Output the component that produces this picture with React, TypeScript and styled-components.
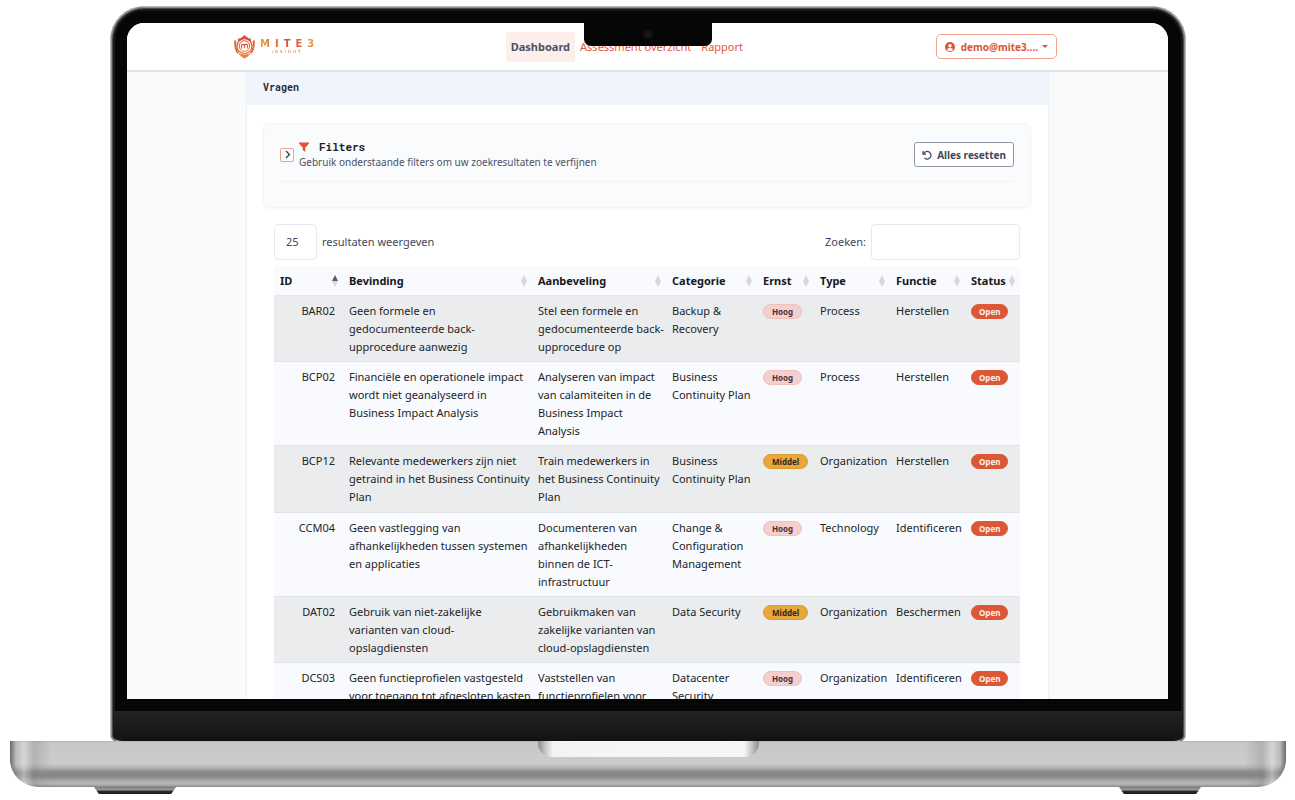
import React from "react";
import styled, { createGlobalStyle, css } from "styled-components";

const GlobalStyle = createGlobalStyle`
  *, *::before, *::after { box-sizing: border-box; }
  body {
    margin: 0;
    background: #fff;
    color: #212529;
    font-family: "Noto Sans", "Open Sans", sans-serif;
    font-size: 11px;
    line-height: 18px;
  }
  button, input, select { font: inherit; color: inherit; }
`;

const mono = `"Roboto Mono", "DejaVu Sans Mono", monospace`;

/* ---------- Laptop ---------- */

const Stage = styled.div`
  display: flex;
  flex-direction: column;
  height: 100vh;
  min-height: 480px;
  padding: 6px 9px 6px 10px;
  overflow: hidden;
`;

const Lid = styled.div`
  position: relative;
  flex: 1;
  min-height: 0;
  display: flex;
  flex-direction: column;
  margin: 0 100px;
  border-radius: 34px 34px 6px 6px;
  background: #060606;
  border: 1px solid #b9bab9;
  border-bottom: 0;
  box-shadow: inset 0 0 0 1px #8d8e8d, inset 0 0 0 2px #4a4b4b, inset 0 0 1px 4px #1b1b1b;
  overflow: hidden;
`;

const Screen = styled.div`
  flex: 1;
  min-height: 0;
  margin: 16px 17px 12px 16px;
  border-radius: 17px 17px 0 0;
  background: #f8fafc;
  overflow: hidden;
`;

const Chin = styled.div`
  height: 30px;
  flex: none;
  margin: 0 3px;
  border-radius: 0 0 8px 8px;
  background: linear-gradient(#232323, #191919 60%, #121212);
`;

const Camera = styled.div`
  position: absolute;
  top: 15px;
  left: 50%;
  transform: translateX(-50%);
  display: grid;
  place-items: center;
  width: 128px;
  height: 24px;
  border-radius: 0 0 7px 7px;
  background: #060606;
  &::before {
    content: "";
    width: 10px;
    height: 10px;
    border-radius: 50%;
    background: radial-gradient(circle, #222224 0 1px, #0c0c0d 2px, #161617 3px, #0e0e0e 5px);
  }
`;

const Base = styled.div`
  position: relative;
  z-index: 1;
  flex: none;
  height: 46px;
  display: flex;
  justify-content: center;
  border-radius: 0 0 28px 28px;
  background:
    linear-gradient(90deg, rgba(70,72,74,.75) 0, rgba(150,152,154,.3) 6px, rgba(225,226,227,.5) 14px, rgba(120,122,124,.3) 24px, rgba(140,142,144,.25) 30px, transparent 42px),
    linear-gradient(270deg, rgba(70,72,74,.75) 0, rgba(150,152,154,.3) 6px, rgba(225,226,227,.5) 14px, rgba(120,122,124,.3) 24px, rgba(140,142,144,.25) 30px, transparent 42px),
    linear-gradient(#a5a6a7 0, #c5c7c8 1px, #cbcccd 22px, #b9babb 26px, #87898b 31px, #828486 35px, #a2a3a5 39px, #b7b8ba 42px, #a9aaac 44px, #848587 46px);
`;

const ThumbGroove = styled.div`
  width: 221px;
  height: 16px;
  border-radius: 0 0 14px 14px;
  background: linear-gradient(90deg, #8c8d8f 0, #c9cacb 8px, #f4f4f4 15px, #f7f7f7 calc(100% - 15px), #c9cacb calc(100% - 8px), #8c8d8f 100%);
`;

const Feet = styled.div`
  flex: none;
  display: flex;
  justify-content: space-between;
  padding: 0 85px 0 84px;
`;

const Foot = styled.div`
  width: 82px;
  height: 7px;
  clip-path: polygon(0 0, 100% 0, 94% 100%, 6% 100%);
  background: linear-gradient(#77797b 0, #a0a1a3 3px, #2b2b2c 4px, #1d1d1e 7px);
`;

/* ---------- Top bar ---------- */

const TopBar = styled.header`
  height: 49px;
  background: #fff;
  border-bottom: 2px solid #e1e5ea;
`;

const TopBarInner = styled.div`
  display: flex;
  align-items: center;
  justify-content: space-between;
  max-width: 827px;
  height: 100%;
  margin: 0 auto;
  padding-right: 4px;
`;

const Brand = styled.a`
  display: flex;
  align-items: center;
  gap: 5px;
  width: 84px;
  text-decoration: none;
`;

const Shield = styled.svg`
  flex: none;
  width: 21px;
  height: 24px;
`;

const Wordmark = styled.span`
  display: grid;
  justify-items: center;
  font-family: "DejaVu Sans", sans-serif;
  font-weight: 700;
  color: transparent;
  background: linear-gradient(90deg, #eca03b, #d9503a 45%, #dc5a38 70%, #e99a3e);
  background-clip: text;
`;

const BrandName = styled.span`
  font-size: 10px;
  line-height: 10px;
  letter-spacing: 5px;
  margin-right: -5px;
`;

const BrandSub = styled.span`
  font-size: 4px;
  line-height: 6px;
  letter-spacing: 2px;
  font-weight: 400;
`;

const Nav = styled.nav`
  display: flex;
`;

const NavLink = styled.a<{ $active?: boolean }>`
  padding: 6px 5px;
  border-radius: 3px;
  color: #e4573a;
  text-decoration: none;
  white-space: nowrap;
  ${(p) =>
    p.$active &&
    css`
      background: #fceeeb;
      color: #4a5065;
      font-weight: 700;
    `}
`;

const UserButton = styled.button`
  display: flex;
  align-items: center;
  gap: 6px;
  height: 25px;
  padding: 0 8px;
  background: #fff;
  border: 1px solid #f0a192;
  border-radius: 5px;
  color: #dc5535;
  font-size: 10px;
  font-weight: 700;
  svg { width: 10px; height: 10px; }
`;

const Caret = styled.span`
  border: 3px solid transparent;
  border-top-color: currentColor;
  border-bottom: 0;
  margin-left: -2px;
`;

/* ---------- Card ---------- */

const Card = styled.main`
  max-width: 803px;
  margin: 0 auto;
  background: #fff;
  border: solid #ecf0f4;
  border-width: 0 1px;
`;

const CardTitle = styled.h1`
  margin: 0;
  padding: 7px 16px 9px;
  background: #f1f4fa;
  font-family: ${mono};
  font-size: 10px;
  line-height: 17px;
  color: #272b3a;
`;

const CardBody = styled.div`
  padding: 18px 17px 18px 16px;
`;

const FilterPanel = styled.section`
  height: 85px;
  padding: 15px 16px;
  border: 1px solid #f2f4f8;
  border-radius: 6px;
  background: #fafbfd;
  box-shadow: 0 1px 2px rgba(30, 40, 60, .04);
`;

const FilterHead = styled.div`
  display: flex;
  align-items: center;
  gap: 5px;
  padding-bottom: 11px;
  border-bottom: 1px solid #f1f3f6;
`;

const ToggleButton = styled.button`
  display: grid;
  place-items: center;
  flex: none;
  width: 14px;
  height: 14px;
  padding: 0;
  background: #fff;
  border: 1px solid #f0a192;
  border-radius: 2px;
  color: #333a4d;
  svg { width: 9px; height: 9px; }
`;

const FilterText = styled.div`
  flex: 1;
`;

const FilterTitle = styled.h2`
  display: flex;
  align-items: center;
  gap: 10px;
  margin: 0;
  font-family: ${mono};
  font-size: 11px;
  line-height: 15px;
  color: #1f2431;
  svg { width: 10px; height: 10px; color: #dd5534; }
`;

const FilterHint = styled.p`
  margin: 0;
  font-size: 10px;
  line-height: 16px;
  color: #4b5266;
`;

const ResetButton = styled.button`
  display: flex;
  align-items: center;
  gap: 5px;
  height: 25px;
  padding: 0 7px;
  background: #fff;
  border: 1px solid #9095a3;
  border-radius: 3px;
  color: #41475b;
  font-size: 10px;
  font-weight: 700;
  svg { width: 10px; height: 10px; }
`;

const ListArea = styled.section`
  padding: 16px 11px 0;
`;

const Controls = styled.div`
  display: flex;
  justify-content: space-between;
  margin-bottom: 6px;
`;

const ControlLabel = styled.label`
  display: flex;
  align-items: center;
  gap: 5px;
  color: #41475b;
`;

const fieldStyle = css`
  height: 36px;
  border: 1px solid #e4e9f2;
  border-radius: 4px;
  background: #fff;
  outline: 0;
`;

const LengthSelect = styled.select`
  ${fieldStyle}
  width: 43px;
  padding: 0 11px;
  appearance: none;
`;

const SearchInput = styled.input`
  ${fieldStyle}
  width: 149px;
  padding: 0 11px;
`;

/* ---------- Table ---------- */

const Table = styled.table`
  width: 100%;
  table-layout: fixed;
  border-collapse: collapse;
  background: #f9fafd;
`;

const HeadCell = styled.th`
  padding: 6px 5px 6px 6px;
  text-align: left;
  font-weight: 700;
  color: #16181b;
  box-shadow: inset 0 -1px #e3e6ea;
`;

const HeadInner = styled.span`
  display: flex;
  align-items: center;
  justify-content: space-between;
  svg { flex: none; width: 6px; height: 12px; }
`;

const Row = styled.tr`
  &:nth-child(odd) { background: #ebecee; }
  &:nth-child(4n + 3) td { padding-bottom: 7px; }
`;

const Cell = styled.td<{ $right?: boolean }>`
  padding: 6px ${(p) => (p.$right ? 8 : 0)}px 6px 6px;
  vertical-align: top;
  text-align: ${(p) => (p.$right ? "right" : "left")};
  box-shadow: inset 0 -1px #dfe2e7;
`;

const tones = {
  hoog: css`background: #f3cfce; border-color: #efbfbc; color: #4d3234;`,
  middel: css`background: #e9a63a; border-color: #dd9b30; color: #33291a;`,
  open: css`background: #dc5735; border-color: #dc5735; color: #fdf0ea;`,
};

const Badge = styled.span<{ $tone: keyof typeof tones }>`
  display: inline-block;
  padding: 0 ${(p) => (p.$tone === "open" ? 7 : 8)}px;
  border: 1px solid;
  border-radius: 8px;
  font-size: 8px;
  line-height: 13px;
  font-weight: 700;
  ${(p) => tones[p.$tone]}
`;

type Finding = {
  id: string;
  finding: string;
  advice: string;
  category: string;
  level: "Hoog" | "Middel";
  type: string;
  func: string;
};

const findings: Finding[] = [
  { id: "BAR02", finding: "Geen formele en gedocumenteerde back-upprocedure aanwezig", advice: "Stel een formele en gedocumenteerde back-upprocedure op", category: "Backup & Recovery", level: "Hoog", type: "Process", func: "Herstellen" },
  { id: "BCP02", finding: "Financiële en operationele impact wordt niet geanalyseerd in Business Impact Analysis", advice: "Analyseren van impact van calamiteiten in de Business Impact Analysis", category: "Business Continuity Plan", level: "Hoog", type: "Process", func: "Herstellen" },
  { id: "BCP12", finding: "Relevante medewerkers zijn niet getraind in het Business Continuity Plan", advice: "Train medewerkers in het Business Continuity Plan", category: "Business Continuity Plan", level: "Middel", type: "Organization", func: "Herstellen" },
  { id: "CCM04", finding: "Geen vastlegging van afhankelijkheden tussen systemen en applicaties", advice: "Documenteren van afhankelijkheden binnen de ICT-infrastructuur", category: "Change & Configuration Management", level: "Hoog", type: "Technology", func: "Identificeren" },
  { id: "DAT02", finding: "Gebruik van niet-zakelijke varianten van cloud-opslagdiensten", advice: "Gebruikmaken van zakelijke varianten van cloud-opslagdiensten", category: "Data Security", level: "Middel", type: "Organization", func: "Beschermen" },
  { id: "DCS03", finding: "Geen functieprofielen vastgesteld voor toegang tot afgesloten kasten", advice: "Vaststellen van functieprofielen voor", category: "Datacenter Security", level: "Hoog", type: "Organization", func: "Identificeren" },
];

const columns = [
  { name: "ID", width: 69 },
  { name: "Bevinding", width: 189 },
  { name: "Aanbeveling", width: 134 },
  { name: "Categorie", width: 91 },
  { name: "Ernst", width: 57 },
  { name: "Type", width: 76 },
  { name: "Functie", width: 75 },
  { name: "Status", width: 55 },
];

const SortMark = ({ up }: { up?: boolean }) => (
  <svg viewBox="0 0 6 12" aria-hidden="true">
    <path d="M3 0 6 6H0z" fill={up ? "#5b5d61" : "#d6d8db"} />
    <path d="M3 12 0 6h6z" fill="#d6d8db" />
  </svg>
);

const Logo = () => (
  <Shield viewBox="0 0 42 48" fill="none" aria-hidden="true">
    <defs>
      <linearGradient id="shield" x1="0" y1="0" x2="0" y2="1">
        <stop offset="0" stopColor="#d9483a" />
        <stop offset="1" stopColor="#e8803a" />
      </linearGradient>
    </defs>
    <path d="M8 10C14 9 18 6 21 3c3 3 7 6 13 7" stroke="#dc4f3a" strokeWidth="4" />
    <path d="M2.500 11c-1 12 1 19 6 25M39.500 11c1 12-1 19-6 25" stroke="#e2683a" strokeWidth="4" />
    <path d="M10 37c3 4 7 7 11 9 4-2 8-5 11-9-7 4-15 4-22 0z" fill="#e8803a" stroke="#e8803a" strokeWidth="2" />
    <g stroke="url(#shield)">
      <circle cx="21" cy="22" r="15" strokeWidth="2.500" />
      <circle cx="21" cy="22" r="10.500" strokeWidth="2" />
      <path d="M15 27v-6q0-2.500 2.500-2.500h1q2.500 0 2.500 2.500v6m0-6q0-2.500 2.500-2.500h1q2.500 0 2.500 2.500v6" strokeWidth="2.500" />
    </g>
  </Shield>
);

export default function App() {
  return (
    <>
      <GlobalStyle />
      <Stage>
        <Lid>
          <Screen>
            <TopBar>
              <TopBarInner>
                <Brand href="#" aria-label="MITE3 Insight">
                  <Logo />
                  <Wordmark>
                    <BrandName>MITE3</BrandName>
                    <BrandSub>INSIGHT</BrandSub>
                  </Wordmark>
                </Brand>
                <Nav>
                  <NavLink href="#" $active>Dashboard</NavLink>
                  <NavLink href="#">Assessment overzicht</NavLink>
                  <NavLink href="#">Rapport</NavLink>
                </Nav>
                <UserButton type="button">
                  <svg viewBox="0 0 20 20" aria-hidden="true">
                    <circle cx="10" cy="10" r="10" fill="currentColor" />
                    <circle cx="10" cy="7.500" r="3.300" fill="#fff" />
                    <path d="M4 15.500c1-5 11-5 12 0-3 3.500-9 3.500-12 0z" fill="#fff" />
                  </svg>
                  demo@mite3....
                  <Caret />
                </UserButton>
              </TopBarInner>
            </TopBar>

            <Card>
              <CardTitle>Vragen</CardTitle>
              <CardBody>
                <FilterPanel>
                  <FilterHead>
                    <ToggleButton type="button" aria-label="Filters">
                      <svg viewBox="0 0 9 9" fill="none" stroke="currentColor" strokeWidth="1.300" aria-hidden="true">
                        <path d="M3 1l3.500 3.500L3 8" />
                      </svg>
                    </ToggleButton>
                    <FilterText>
                      <FilterTitle>
                        <svg viewBox="0 0 20 20" fill="currentColor" aria-hidden="true">
                          <path d="M0 1h20v2l-7.500 8.500V20L7.500 16v-4.500L0 3z" />
                        </svg>
                        Filters
                      </FilterTitle>
                      <FilterHint>Gebruik onderstaande filters om uw zoekresultaten te verfijnen</FilterHint>
                    </FilterText>
                    <ResetButton type="button">
                      <svg viewBox="0 0 20 20" fill="none" stroke="currentColor" strokeWidth="2.500" aria-hidden="true">
                        <path d="M2 2v6h6" />
                        <path d="M3 7.500C6 2.500 11 1.500 15 4.500c4 3.500 4 9 0 12-3 2-7 2-10-.5" />
                      </svg>
                      Alles resetten
                    </ResetButton>
                  </FilterHead>
                </FilterPanel>

                <ListArea>
                  <Controls>
                    <ControlLabel>
                      <LengthSelect defaultValue="25">
                        <option>25</option>
                        <option>50</option>
                      </LengthSelect>
                      resultaten weergeven
                    </ControlLabel>
                    <ControlLabel>
                      Zoeken:
                      <SearchInput type="search" />
                    </ControlLabel>
                  </Controls>
                  <Table>
                    <colgroup>
                      {columns.map((c) => (
                        <col key={c.name} width={c.width} />
                      ))}
                    </colgroup>
                    <thead>
                      <tr>
                        {columns.map((c, i) => (
                          <HeadCell key={c.name} scope="col">
                            <HeadInner>
                              {c.name}
                              <SortMark up={i === 0} />
                            </HeadInner>
                          </HeadCell>
                        ))}
                      </tr>
                    </thead>
                    <tbody>
                      {findings.map((f) => (
                        <Row key={f.id}>
                          <Cell $right>{f.id}</Cell>
                          <Cell>{f.finding}</Cell>
                          <Cell>{f.advice}</Cell>
                          <Cell>{f.category}</Cell>
                          <Cell>
                            <Badge $tone={f.level === "Hoog" ? "hoog" : "middel"}>{f.level}</Badge>
                          </Cell>
                          <Cell>{f.type}</Cell>
                          <Cell>{f.func}</Cell>
                          <Cell>
                            <Badge $tone="open">Open</Badge>
                          </Cell>
                        </Row>
                      ))}
                    </tbody>
                  </Table>
                </ListArea>
              </CardBody>
            </Card>
          </Screen>
          <Chin />
          <Camera />
        </Lid>
        <Base>
          <ThumbGroove />
        </Base>
        <Feet>
          <Foot />
          <Foot />
        </Feet>
      </Stage>
    </>
  );
}
